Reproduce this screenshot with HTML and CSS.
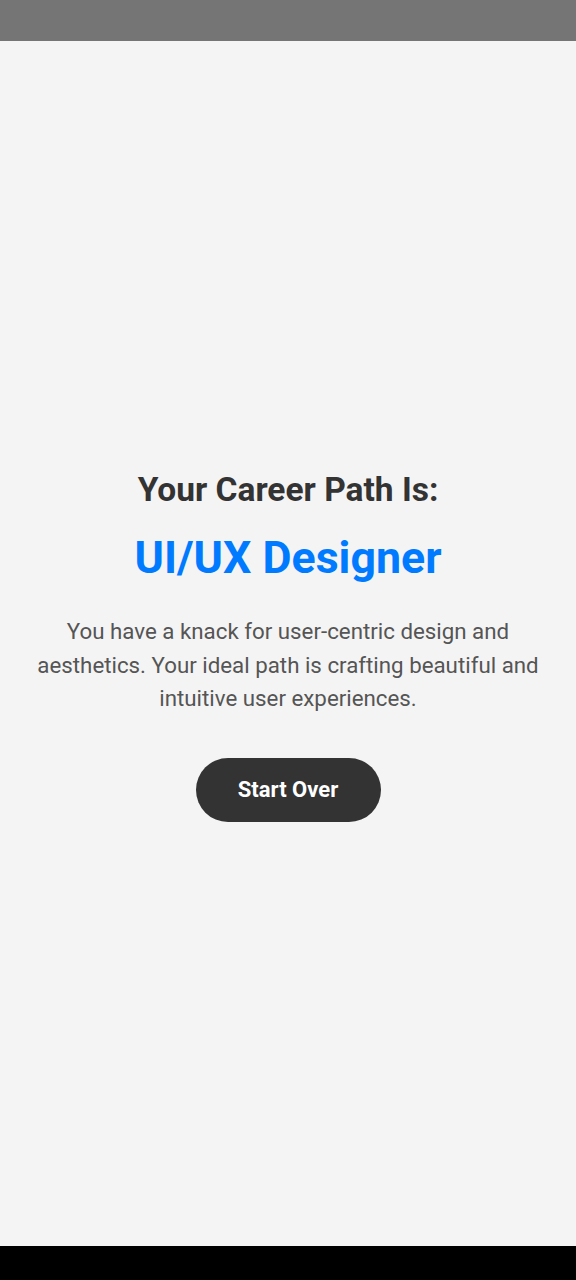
FILE: index.html
```html
<!DOCTYPE html>
<html lang="en">
<head>
<meta charset="utf-8">
<title>Career Path</title>
<link rel="stylesheet" href="styles.css">
</head>
<body>
<div class="status-bar"></div>
<main class="screen">
  <section class="result">
    <h2 class="result-label">Your Career Path Is:</h2>
    <h1 class="result-title">UI/UX Designer</h1>
    <p class="result-desc">You have a knack for user-centric design and aesthetics. Your ideal path is crafting beautiful and intuitive user experiences.</p>
    <button class="restart-btn" type="button">Start Over</button>
  </section>
</main>
<div class="nav-bar"></div>
</body>
</html>
```

FILE: styles.css
```css
html, body {
  margin: 0;
  padding: 0;
  height: 100%;
}
body {
  display: flex;
  flex-direction: column;
  height: 1280px;
  background: #f4f4f4;
  font-family: Roboto, "Noto Sans", "Liberation Sans", sans-serif;
}
.status-bar {
  height: 41px;
  background: #757575;
  flex: none;
}
.screen {
  flex: 1;
  display: flex;
  align-items: center;
  justify-content: center;
  padding: 5px 30px 0;
}
.result {
  display: flex;
  flex-direction: column;
  align-items: center;
  text-align: center;
}
.result-label {
  margin: 0;
  font-size: 33.5px;
  font-weight: 700;
  color: #333333;
  line-height: 40px;
}
.result-title {
  margin: 22px 0 0;
  font-size: 44.7px;
  font-weight: 700;
  color: #007bff;
  line-height: 52px;
}
.result-desc {
  margin: 31px 0 0;
  font-size: 22.3px;
  line-height: 33.5px;
  color: #555555;
}
.restart-btn {
  margin-top: 42px;
  width: 185px;
  height: 64px;
  border: none;
  border-radius: 32px;
  background: #333333;
  color: #ffffff;
  font-family: inherit;
  font-size: 22px;
  font-weight: 700;
}
.nav-bar {
  height: 34px;
  background: #000000;
  flex: none;
}
```
